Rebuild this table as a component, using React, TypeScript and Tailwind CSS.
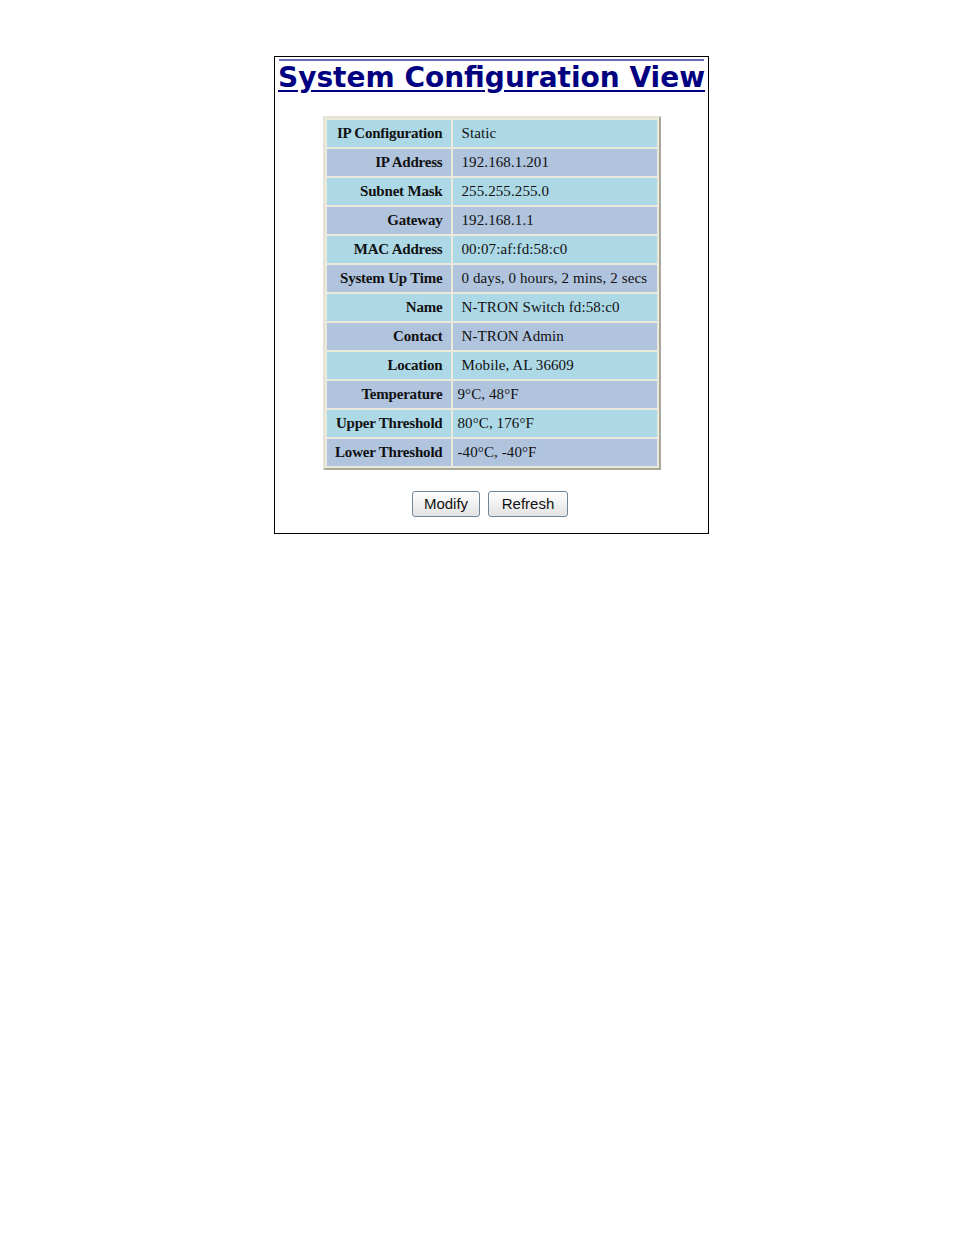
import React from "react";

const rows: [string, string, boolean?][] = [
  ["IP Configuration", "Static"],
  ["IP Address", "192.168.1.201"],
  ["Subnet Mask", "255.255.255.0"],
  ["Gateway", "192.168.1.1"],
  ["MAC Address", "00:07:af:fd:58:c0"],
  ["System Up Time", "0 days, 0 hours, 2 mins, 2 secs"],
  ["Name", "N-TRON Switch fd:58:c0"],
  ["Contact", "N-TRON Admin"],
  ["Location", "Mobile, AL 36609"],
  ["Temperature", "9°C, 48°F", true],
  ["Upper Threshold", "80°C, 176°F", true],
  ["Lower Threshold", "-40°C, -40°F", true],
];

export default function App() {
  return (
    <div className="min-h-[1235px] bg-white pt-[56px]">
      <div className="ml-[274px] w-[435px] h-[478px] border border-black px-[3px] pt-[2px]">
        <div className="h-[2px] bg-[#6b6bb5] mx-[1px]" />
        <div
          className="text-center text-[#000080] font-bold underline text-[28px] leading-[32px] mt-[1px] whitespace-nowrap"
          style={{ fontFamily: '"DejaVu Sans", Verdana, sans-serif', textUnderlineOffset: "3px" }}
        >
          System Configuration View
        </div>
        <div className="flex justify-center mt-[22px]">
          <table
            className="border-2 border-t-[#e4e1d6] border-l-[#e4e1d6] border-b-[#a9a89c] border-r-[#a9a89c] bg-[#ebe8dc]"
            style={{ borderCollapse: "separate", borderSpacing: "2px", fontFamily: '"Liberation Serif", "Times New Roman", serif' }}
          >
            <tbody>
              {rows.map(([k, v, t], i) => {
                const bg = i % 2 === 0 ? "bg-[#add8e6]" : "bg-[#b0c4de]";
                return (
                  <tr key={k}>
                    <td className={`${bg} w-[124px] h-[27px] text-right pr-[8px] font-bold text-[15px] tracking-[-0.2px] text-[#111] whitespace-nowrap`}>
                      {k}
                    </td>
                    <td className={`${bg} w-[204px] h-[27px] text-left ${t ? "pl-[5px]" : "pl-[9px]"} text-[15px] tracking-[0.1px] text-[#111] whitespace-nowrap`}>
                      {v}
                    </td>
                  </tr>
                );
              })}
            </tbody>
          </table>
        </div>
        <div className="flex justify-center gap-[8px] mt-[21px] ml-[-3px]" style={{ fontFamily: '"Liberation Sans", Arial, sans-serif' }}>
          <button className="h-[26px] w-[68px] rounded-[3px] border border-[#6f86a0] bg-gradient-to-b from-[#ffffff] to-[#e3e3e3] text-[15px] text-[#111]">
            Modify
          </button>
          <button className="h-[26px] w-[80px] rounded-[3px] border border-[#6f86a0] bg-gradient-to-b from-[#ffffff] to-[#e3e3e3] text-[15px] text-[#111]">
            Refresh
          </button>
        </div>
      </div>
    </div>
  );
}
